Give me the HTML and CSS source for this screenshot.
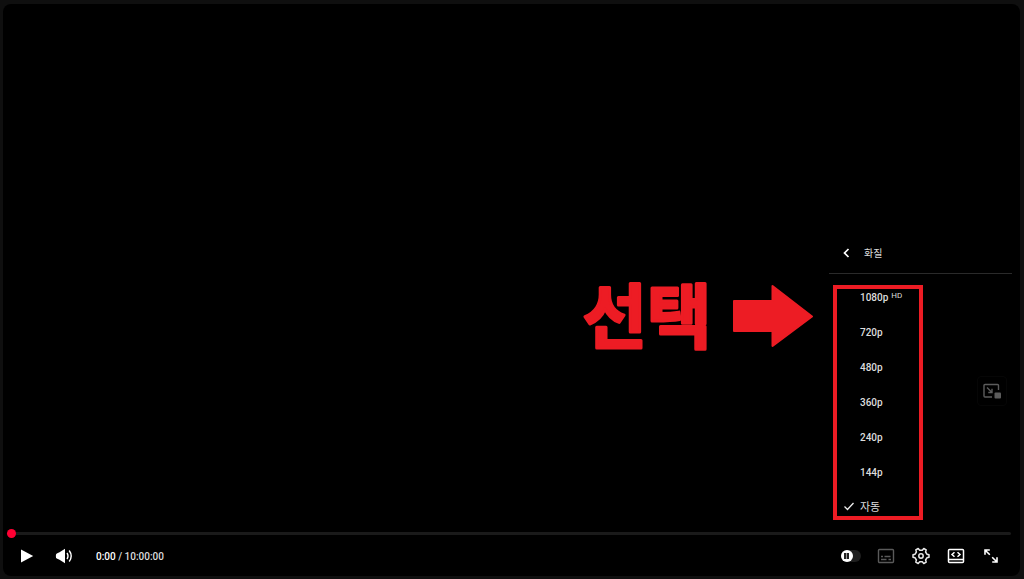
FILE: index.html
```html
<!DOCTYPE html>
<html lang="ko">
<head>
  <meta charset="UTF-8" />
  <meta name="viewport" content="width=device-width, initial-scale=1" />
  <title>화질</title>
  <link rel="stylesheet" href="styles.css">
</head>
<body>

  <main class="player">
    <div class="stage"></div>

    <input class="progress" type="range" min="0" max="36000" value="0" aria-label="탐색 슬라이더" />

    <div class="controls">
      <button class="control-btn left-btn" aria-label="재생">
        <svg width="14" height="16" viewBox="0 0 14 16"><path d="M1 1.500v13L13.200 8z" fill="#fff"/></svg>
      </button>
      <button class="control-btn left-btn" aria-label="음소거">
        <svg width="18" height="16" viewBox="0 0 18 16">
          <path d="M10 .8v14.400L4.500 11.800 1.800 10.600Q.9 10 .9 9V7Q.9 6 1.800 5.400L4.500 4.200z" fill="#fff"/>
          <path d="M12 5q2 3 0 6M14.200 2.500q4 5.500 0 11" fill="none" stroke="#fff" stroke-width="1.400"/>
        </svg>
      </button>
      <div class="time"><span class="current">0:00</span> / 10:00:00</div>

      <div class="right-controls">
        <label class="control-btn"><input class="autoplay" type="checkbox" checked aria-label="자동재생" /></label>
        <button class="control-btn" aria-label="자막">
          <svg width="18" height="16" viewBox="0 0 18 16" fill="none" stroke="#5a5a5a">
            <rect x="1.500" y="1.500" width="15" height="13" rx="1" stroke-width="1.400"/>
            <path d="M4 8.500h2M7.500 8.500h6M4 11.500h5.500M11.500 11.500h2.500" stroke-width="1.300"/>
          </svg>
        </button>
        <button class="control-btn" aria-label="설정">
          <svg width="18" height="18" viewBox="0 0 18 18" fill="none" stroke="#e8e8e8" stroke-width="1.500" stroke-linejoin="round">
            <path d="M6.200 1.500L7.700 3.200h2.600L11.800 1.500 14.200 2.900 13.600 5 14.900 7.200 17 7.700v2.600l-2.100.5L13.600 13l.6 2.100-2.400 1.400-1.500-1.700H7.700l-1.500 1.700-2.400-1.400.6-2.100-1.300-2.200L1 10.300V7.700l2.100-.5L4.400 5l-.6-2.100z"/>
            <circle cx="9" cy="9" r="2.200"/>
          </svg>
        </button>
        <button class="control-btn" aria-label="영화관 모드">
          <svg width="18" height="16" viewBox="0 0 18 16" fill="none" stroke="#fff" stroke-width="1.500">
            <rect x="1.500" y="1.500" width="15" height="13" rx="1"/>
            <path d="M1.500 11.500h15M7.500 4.200L5 6.500l2.500 2.300M10.500 4.200L13 6.500l-2.500 2.300"/>
          </svg>
        </button>
        <button class="control-btn" aria-label="전체화면">
          <svg width="16" height="16" viewBox="0 0 16 16" fill="none" stroke="#fff" stroke-width="1.600">
            <path d="M2 6.800V2h4.800M2 2l4.800 4.800M14 9.200V14H9.200M14 14L9.200 9.200"/>
          </svg>
        </button>
      </div>
    </div>

    <button class="pip-btn" aria-label="미니 플레이어">
      <svg width="20" height="18" viewBox="0 0 20 18" fill="none" stroke="#5c5c5c" stroke-width="1.400">
        <path d="M16.500 8V3.500q0-1-1-1H3q-1 0-1 1v10.500q0 1 1 1h7"/>
        <path d="M5 5.500l4.500 4.500M10 6.800v3.700H6.300"/>
        <rect x="12.500" y="10.500" width="6.500" height="6" rx="1" fill="#5c5c5c" stroke="none"/>
      </svg>
    </button>

    <div class="overlay">
      <div class="callout">
        <svg class="callout-text" width="136" height="120" viewBox="0 0 136 120">
          <text x="68" y="87" text-anchor="middle">선택</text>
        </svg>
        <svg width="82" height="64" viewBox="0 0 82 64">
          <path d="M2 17h38.500V2L80 32.500 40.500 62V47H2z" fill="#ed1c24" stroke="#ed1c24" stroke-width="2" stroke-linejoin="round"/>
        </svg>
      </div>

      <div class="menu">
        <button class="menu-header">
          <svg width="8" height="10" viewBox="0 0 8 10"><path d="M6.500 1l-4 4 4 4" fill="none" stroke="#fff" stroke-width="1.700"/></svg>
          화질
        </button>
        <div class="quality-list">
          <button class="quality">1080p<sup>HD</sup></button>
          <button class="quality">720p</button>
          <button class="quality">480p</button>
          <button class="quality">360p</button>
          <button class="quality">240p</button>
          <button class="quality">144p</button>
          <button class="quality selected">
            <svg width="12" height="10" viewBox="0 0 12 10"><path d="M1.500 5.500l3 3 6-6.500" fill="none" stroke="#eee" stroke-width="1.300"/></svg>
            자동
          </button>
        </div>
      </div>
    </div>
  </main>

</body>
</html>
```

FILE: styles.css
```css
* {
  box-sizing: border-box;
}
body {
  margin: 0;
  padding: 4px 4px 3px 3px;
  background: #0f0f0f;
  color: #ddd;
  font-family: Roboto, "Noto Sans CJK KR", sans-serif;
  font-size: 10px;
}
button {
  margin: 0;
  padding: 0;
  border: none;
  background: none;
  color: inherit;
  font: inherit;
  cursor: pointer;
}
svg {
  display: block;
  flex: none;
}
.player {
  position: relative;
  display: flex;
  flex-direction: column;
  min-height: calc(100vh - 7px);
  background: #000;
  border-radius: 8px;
  overflow: hidden;
}
.stage {
  flex: 1;
}

/* progress bar */
.progress {
  appearance: none;
  height: 9px;
  margin: 0 9px 0 4px;
  background: none;
}
.progress::-webkit-slider-runnable-track {
  height: 3px;
  border-radius: 2px;
  background: #1a1a1a;
}
.progress::-webkit-slider-thumb {
  appearance: none;
  width: 9px;
  height: 9px;
  margin-top: -3px;
  border-radius: 50%;
  background: #ff0033;
}

/* bottom controls */
.controls {
  display: flex;
  align-items: center;
  height: 36px;
  margin-bottom: 2px;
  padding: 0 12px 0 5px;
}
.control-btn {
  display: flex;
  align-items: center;
  justify-content: center;
  width: 35px;
  height: 36px;
}
.left-btn {
  width: 37px;
}
.time {
  margin-left: 14px;
  font-weight: 500;
}
.current {
  color: #fff;
}
.right-controls {
  display: flex;
  margin-left: auto;
}
.autoplay {
  appearance: none;
  width: 20px;
  height: 12px;
  margin: 0;
  border-radius: 6px;
  background: #1e1e1e;
}
.autoplay::before {
  content: "";
  display: block;
  width: 12px;
  height: 12px;
  border-radius: 50%;
  background: linear-gradient(90deg, #222 2px, #999 2px, #999 3px, #222 3px) center / 5px 6px no-repeat #fff;
}

.pip-btn {
  position: absolute;
  right: 13px;
  bottom: 170px;
  display: flex;
  align-items: center;
  justify-content: center;
  width: 30px;
  height: 30px;
  border: 1px solid #060606;
  border-radius: 4px;
}

/* quality menu and the callout pointing at it */
.overlay {
  position: absolute;
  right: 8px;
  bottom: 56px;
  display: flex;
  gap: 15px;
  pointer-events: none;
}
.callout {
  display: flex;
  align-items: center;
  gap: 17px;
  height: 64px;
  margin-top: 52px;
}
.callout-text {
  fill: #ed1c24;
  stroke: #ed1c24;
  stroke-width: 3px;
  stroke-linejoin: round;
  font-family: "Noto Sans CJK KR", sans-serif;
  font-size: 70px;
  font-weight: 700;
}
.menu {
  width: 183px;
  pointer-events: auto;
}
.menu-header {
  display: flex;
  align-items: center;
  gap: 14px;
  width: 100%;
  height: 42px;
  padding: 0 13px;
  border-bottom: 1px solid #2a2a2a;
}
.quality-list {
  display: flex;
  flex-direction: column;
  width: 90px;
  margin: 11px 0 0 4px;
  border: 4px solid #ed1c24;
}
.quality {
  display: flex;
  align-items: center;
  height: 35px;
  padding-left: 23px;
  font-weight: 500;
}
.quality:first-child {
  height: 26px;
  padding-bottom: 9px;
}
.quality sup {
  margin: 0 0 4px 3px;
  font-size: 8px;
  font-weight: 400;
  line-height: 8px;
}
.quality.selected {
  gap: 5px;
  height: 26px;
  padding: 6px 0 0 6px;
  font-size: 11px;
  font-weight: 400;
}
```
